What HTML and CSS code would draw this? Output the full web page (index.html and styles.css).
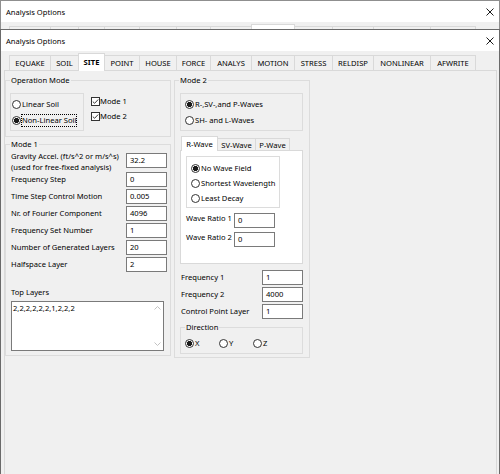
FILE: index.html
```html
<!DOCTYPE html>
<html>
<head>
<meta charset="utf-8">
<title>Analysis Options</title>
<link rel="stylesheet" href="styles.css">
</head>
<body>
<div class="screen">
  <div class="win back">
    <div class="titlebar">
      <span class="title">Analysis Options</span>
      <svg class="close" viewBox="0 0 8 8" width="8" height="8"><path d="M0.5 0.5 L7.5 7.5 M7.5 0.5 L0.5 7.5" stroke="#000" stroke-width="0.9" fill="none"/></svg>
    </div>
    <div class="winbody">
      <div class="tabs">
        <div class="tab w-equake"></div>
        <div class="tab w-soil"></div>
        <div class="tab w-site"></div>
        <div class="tab w-point"></div>
        <div class="tab w-house"></div>
        <div class="tab w-force"></div>
        <div class="tab w-analys"></div>
        <div class="tab w-motion sel"></div>
        <div class="tab w-stress"></div>
        <div class="tab w-reldisp"></div>
        <div class="tab w-nonlinear"></div>
        <div class="tab w-afwrite"></div>
      </div>
    </div>
  </div>

  <div class="win front">
    <div class="titlebar">
      <span class="title">Analysis Options</span>
      <svg class="close" viewBox="0 0 8 8" width="8" height="8"><path d="M0.5 0.5 L7.5 7.5 M7.5 0.5 L0.5 7.5" stroke="#000" stroke-width="0.9" fill="none"/></svg>
    </div>
    <div class="winbody">
      <div class="tabs">
        <div class="tab w-equake">EQUAKE</div>
        <div class="tab w-soil">SOIL</div>
        <div class="tab w-site sel">SITE</div>
        <div class="tab w-point">POINT</div>
        <div class="tab w-house">HOUSE</div>
        <div class="tab w-force">FORCE</div>
        <div class="tab w-analys">ANALYS</div>
        <div class="tab w-motion">MOTION</div>
        <div class="tab w-stress">STRESS</div>
        <div class="tab w-reldisp">RELDISP</div>
        <div class="tab w-nonlinear">NONLINEAR</div>
        <div class="tab w-afwrite">AFWRITE</div>
      </div>

      <div class="panel">
        <div class="col col-left">
          <fieldset class="group opmode">
            <legend>Operation Mode</legend>
            <div class="opmode-row">
              <div class="box soilbox">
                <div class="opt"><span class="radio"></span><span class="lbl">Linear Soil</span></div>
                <div class="opt"><span class="radio on"></span><span class="lbl focus">Non-Linear Soil</span></div>
              </div>
              <div class="checks">
                <div class="copt"><svg class="check" viewBox="0 0 9 9" width="9" height="9"><rect x="0.5" y="0.5" width="8" height="8" fill="#fff" stroke="#333"/><polyline points="1.8,4.6 3.6,6.3 7.2,2.5" fill="none" stroke="#222" stroke-width="0.9"/></svg><span class="lbl">Mode 1</span></div>
                <div class="copt"><svg class="check" viewBox="0 0 9 9" width="9" height="9"><rect x="0.5" y="0.5" width="8" height="8" fill="#fff" stroke="#333"/><polyline points="1.8,4.6 3.6,6.3 7.2,2.5" fill="none" stroke="#222" stroke-width="0.9"/></svg><span class="lbl">Mode 2</span></div>
              </div>
            </div>
          </fieldset>

          <fieldset class="group mode1">
            <legend>Mode 1</legend>
            <div class="field two"><span class="flabel">Gravity Accel. (ft/s^2 or m/s^s)<br>(used for free-fixed analysis)</span><span class="input">32.2</span></div>
            <div class="field"><span class="flabel">Frequency Step</span><span class="input">0</span></div>
            <div class="field"><span class="flabel">Time Step Control Motion</span><span class="input">0.005</span></div>
            <div class="field"><span class="flabel">Nr. of Fourier Component</span><span class="input">4096</span></div>
            <div class="field"><span class="flabel">Frequency Set Number</span><span class="input">1</span></div>
            <div class="field"><span class="flabel">Number of Generated Layers</span><span class="input">20</span></div>
            <div class="field"><span class="flabel">Halfspace Layer</span><span class="input">2</span></div>
            <div class="toplabel">Top Layers</div>
            <div class="memo">
              <div class="memo-text">2,2,2,2,2,2,1,2,2,2</div>
              <div class="memo-scroll">
                <svg viewBox="0 0 7 4" width="7" height="4"><polyline points="0.5,3.5 3.5,0.5 6.5,3.5" fill="none" stroke="#c2c2c2" stroke-width="1"/></svg>
                <svg viewBox="0 0 7 4" width="7" height="4"><polyline points="0.5,0.5 3.5,3.5 6.5,0.5" fill="none" stroke="#c2c2c2" stroke-width="1"/></svg>
              </div>
            </div>
          </fieldset>
        </div>

        <div class="col col-right">
          <fieldset class="group mode2">
            <legend>Mode 2</legend>
            <div class="box wavebox">
              <div class="opt"><span class="radio on"></span><span class="lbl">R-,SV-,and P-Waves</span></div>
              <div class="opt"><span class="radio"></span><span class="lbl">SH- and L-Waves</span></div>
            </div>

            <div class="stabs">
              <div class="stab w-r sel">R-Wave</div>
              <div class="stab w-sv">SV-Wave</div>
              <div class="stab w-p">P-Wave</div>
            </div>
            <div class="spane">
              <div class="box fieldbox">
                <div class="sopt"><span class="radio on"></span><span class="lbl">No Wave Field</span></div>
                <div class="sopt"><span class="radio"></span><span class="lbl">Shortest Wavelength</span></div>
                <div class="sopt"><span class="radio"></span><span class="lbl">Least Decay</span></div>
              </div>
              <div class="wfield first"><span class="wlabel">Wave Ratio 1</span><span class="input">0</span></div>
              <div class="wfield"><span class="wlabel">Wave Ratio 2</span><span class="input">0</span></div>
            </div>

            <div class="rfields">
              <div class="field"><span class="rlabel">Frequency 1</span><span class="input">1</span></div>
              <div class="field"><span class="rlabel">Frequency 2</span><span class="input">4000</span></div>
              <div class="field"><span class="rlabel">Control Point Layer</span><span class="input">1</span></div>
            </div>

            <fieldset class="group direction">
              <legend>Direction</legend>
              <div class="dirrow">
                <div class="dopt"><span class="radio on"></span><span class="lbl">X</span></div>
                <div class="dopt"><span class="radio"></span><span class="lbl">Y</span></div>
                <div class="dopt"><span class="radio"></span><span class="lbl">Z</span></div>
              </div>
            </fieldset>
          </fieldset>
        </div>
      </div>
    </div>
  </div>
</div>
</body>
</html>
```

FILE: styles.css
```css
* { box-sizing: border-box; }
html, body { margin: 0; padding: 0; }
body {
  width: 500px;
  height: 474px;
  overflow: hidden;
  background: #fff;
  color: #000;
  font-family: "Noto Sans", "Liberation Sans", sans-serif;
  font-size: 7.6px;
}
.screen {
  width: 500px;
  height: 474px;
  display: flex;
  flex-direction: column;
  overflow: hidden;
}
.win {
  display: flex;
  flex-direction: column;
  background: #fff;
}
.back {
  height: 29px;
  flex: none;
  border: 1px solid #8f8f8f;
  border-bottom: 0;
  overflow: hidden;
}
.front {
  flex: 1;
  min-height: 0;
  border: 1px solid #6a6a6a;
  border-bottom: 0;
}
.titlebar {
  height: 21px;
  flex: none;
  display: flex;
  align-items: center;
  justify-content: space-between;
  padding: 0 5px 0 5px;
  background: #fff;
}
.title { white-space: nowrap; }
.close { display: block; }
.winbody {
  flex: 1;
  min-height: 0;
  display: flex;
  flex-direction: column;
  background: #f0f0f0;
  padding: 0 2px 0 3px;
}

/* main tabs */
.tabs {
  height: 19px;
  flex: none;
  display: flex;
  align-items: flex-end;
  padding-left: 5px;
}
.tab {
  height: 15px;
  border: 1px solid #d9d9d9;
  border-bottom: 0;
  background: #f0f0f0;
  margin-right: -1px;
  display: flex;
  align-items: center;
  justify-content: center;
  white-space: nowrap;
}
.tab.sel {
  height: 18px;
  margin-bottom: -1px;
  background: #fff;
  position: relative;
  z-index: 1;
  font-weight: bold;
  padding-bottom: 1px;
}
.w-equake { width: 42px; }
.w-soil { width: 29px; }
.w-site { width: 27px; }
.w-point { width: 36px; }
.w-house { width: 38px; }
.w-force { width: 35px; }
.w-analys { width: 42px; }
.w-motion { width: 44px; }
.w-stress { width: 39px; }
.w-reldisp { width: 42px; }
.w-nonlinear { width: 58px; }
.w-afwrite { width: 46px; }

.panel {
  flex: 1;
  min-height: 0;
  border: 1px solid #d9d9d9;
  border-bottom: 0;
  background: #f0f0f0;
  padding-top: 4px;
  display: flex;
  align-items: flex-start;
  gap: 3px;
}
.col { display: flex; flex-direction: column; flex: none; }
.col-left { width: 166px; }
.col-right { width: 136px; }

/* group boxes */
.group {
  margin: 0;
  min-width: 0;
  border: 1px solid #dcdcdc;
}
.group > legend {
  padding: 0 1px;
  height: 10px;
  line-height: 10px;
  white-space: nowrap;
}
.box {
  border: 1px solid #dcdcdc;
}

.opmode { padding: 0 4px 5px 4px; }
.opmode-row {
  display: flex;
  gap: 7px;
  margin-top: 8px;
  align-items: flex-start;
}
.soilbox {
  width: 74px;
  padding: 2px 1px;
}
.opt {
  display: flex;
  align-items: center;
  height: 16px;
}
.lbl {
  border: 1px solid transparent;
  line-height: 11px;
  white-space: nowrap;
}
.lbl.focus { border: 1px dotted #000; }
.radio {
  width: 9px;
  height: 9px;
  flex: none;
  border: 1px solid #333;
  border-radius: 50%;
  background: #fff;
}
.radio.on {
  background: radial-gradient(circle at center, #1a1a1a 0 2.3px, #fff 2.9px);
}
.checks { padding-top: 1px; }
.copt {
  display: flex;
  align-items: center;
  height: 15px;
}
.check { display: block; flex: none; }
.copt .lbl { margin-left: -1px; }

.mode1 {
  margin-top: 2px;
  padding: 2px 4px 4px 5px;
}
.mode1 > legend { margin-left: -1px; }
.field {
  display: flex;
  align-items: flex-start;
  height: 17px;
}
.field.two { height: 21px; }
.flabel {
  width: 115px;
  flex: none;
  line-height: 15px;
  white-space: nowrap;
}
.field.two .flabel { line-height: 11px; }
.field.two .input { margin-top: 2px; }
.input {
  width: 41px;
  height: 15px;
  flex: none;
  border: 1px solid #7a7a7a;
  background: #fff;
  padding-left: 3px;
  line-height: 13px;
  white-space: nowrap;
}
.toplabel {
  margin-top: 13px;
  line-height: 11px;
}
.memo {
  margin-top: 3px;
  width: 153px;
  height: 50px;
  border: 1px solid #7a7a7a;
  background: #fff;
  display: flex;
}
.memo-text {
  flex: 1;
  padding: 1px 1px;
  line-height: 11px;
}
.memo-scroll {
  width: 12px;
  display: flex;
  flex-direction: column;
  justify-content: space-between;
  align-items: center;
  padding: 4px 0 4px 0;
}
.memo-scroll svg { display: block; }

.mode2 { padding: 0 6px 3px 5px; }
.mode2 > legend { margin-left: -1px; }
.wavebox {
  margin-top: 8px;
  padding: 2px 4px;
}

.stabs {
  margin-top: 5px;
  height: 14px;
  display: flex;
  align-items: flex-end;
  padding-left: 1px;
}
.stab {
  height: 12px;
  border: 1px solid #d9d9d9;
  border-bottom: 0;
  background: #f0f0f0;
  margin-right: -1px;
  display: flex;
  align-items: center;
  justify-content: center;
  white-space: nowrap;
}
.stab.sel {
  height: 15px;
  margin-bottom: -1px;
  background: #fff;
  position: relative;
  z-index: 1;
  padding-bottom: 1px;
}
.w-r { width: 37px; }
.w-sv { width: 39px; }
.w-p { width: 35px; }
.spane {
  border: 1px solid #d9d9d9;
  background: #fff;
  padding: 5px 5px 16px 5px;
}
.fieldbox {
  width: 94px;
  padding: 4px 4px 1px 4px;
}
.sopt {
  display: flex;
  align-items: center;
  height: 15px;
}
.wfield {
  display: flex;
  align-items: flex-start;
  height: 15px;
  margin-top: 4px;
}
.wfield.first { margin-top: 5px; }
.wlabel {
  width: 48px;
  flex: none;
  line-height: 11px;
  white-space: nowrap;
}

.rfields { margin-top: 6px; }
.rlabel {
  width: 82px;
  flex: none;
  padding-left: 1px;
  line-height: 15px;
  white-space: nowrap;
}

.direction {
  margin-top: 1px;
  padding: 4px 4px 3px 4px;
}
.dirrow {
  display: flex;
  height: 14px;
  align-items: center;
}
.dopt {
  width: 34px;
  display: flex;
  align-items: center;
}
```
